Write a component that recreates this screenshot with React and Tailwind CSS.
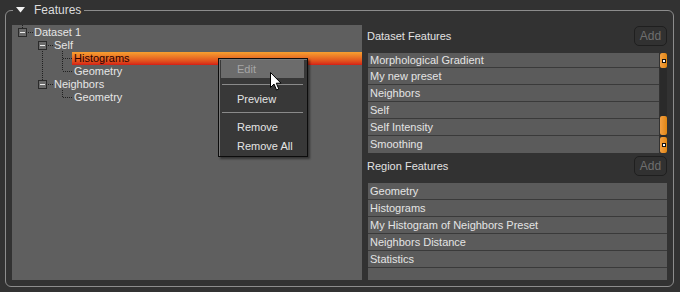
import React from "react";

const font = { fontFamily: '"Liberation Sans", Arial, sans-serif' };

function MinusBox() {
  return (
    <div className="w-[9px] h-[9px] border border-[#2a2a2a] bg-[#6a6a6a] flex items-center justify-center shrink-0">
      <div className="w-[5px] h-px bg-[#eeeeee]" />
    </div>
  );
}

function TreeRow({ indent, box, children, selected }) {
  return (
    <div className="h-[13px] flex items-center" style={{ paddingLeft: indent }}>
      {box && <MinusBox />}
      {box ? (
        <span className="ml-[7px] text-[#e6e6e6]">{children}</span>
      ) : selected ? (
        <div className="flex-1 h-[13px] flex items-center pl-[2px] bg-linear-to-b from-[#f7a030] to-[#d41c16] text-[#2a0000]">
          {children}
        </div>
      ) : (
        <span className="pl-[2px] text-[#e6e6e6]">{children}</span>
      )}
    </div>
  );
}

function AddButton() {
  return (
    <div className="w-[33px] h-[20px] rounded-[5px] border border-[#1f1f1f] bg-[#313131] flex items-center justify-center text-[12px] text-[#6f6f6f]">
      Add
    </div>
  );
}

function ListRow({ h, children, last }) {
  return (
    <div
      className={`flex items-center pl-[2px] text-[#e4e4e4] bg-[#5b5b5b] ${last ? "" : "border-b border-[#3a3a3a]"}`}
      style={{ height: h }}
    >
      {children}
    </div>
  );
}

function ScrollBtn({ h }) {
  return (
    <div className="w-[7px] rounded-[2px] bg-linear-to-r from-[#f4a040] to-[#e0860e] flex items-center justify-center" style={{ height: h }}>
      <div className="w-[4px] h-[4px] bg-[#111] flex items-center justify-center">
        <div className="w-[2px] h-[2px] bg-white" />
      </div>
    </div>
  );
}

export default function App() {
  return (
    <div className="relative w-[680px] h-[292px] bg-[#323232] pt-[10px] px-[5px] text-[11px] leading-none" style={font}>
      <div className="relative w-[669px] h-[277px] border border-[#8c8c8c] rounded-[6px] flex pl-[6px] pt-[14px]">
        {/* title */}
        <div className="absolute -top-[9px] left-[7px] h-[16px] bg-[#323232] flex items-center pl-[3px] pr-[3px]">
          <svg width="9" height="6" viewBox="0 0 9 6">
            <polygon points="0,0 9,0 4.5,5.5" fill="#f2f2f2" />
          </svg>
          <span className="ml-[9px] text-[12px] text-[#dcdcdc]">Features</span>
        </div>

        {/* tree panel */}
        <div className="relative w-[350px] h-[255px] bg-[#5f5f5f] pt-[1px]">
          <svg className="absolute left-0 top-0" width="80" height="80">
            <g stroke="#202020" strokeWidth="1" strokeDasharray="1 1" shapeRendering="crispEdges" fill="none">
              <line x1="10.5" y1="0" x2="10.5" y2="3" />
              <line x1="16" y1="7.5" x2="22" y2="7.5" />
              <line x1="36" y1="20.5" x2="42" y2="20.5" />
              <line x1="30.5" y1="26" x2="30.5" y2="55" />
              <line x1="50.5" y1="26" x2="50.5" y2="46" />
              <line x1="51" y1="33.5" x2="60" y2="33.5" />
              <line x1="51" y1="46.5" x2="60" y2="46.5" />
              <line x1="36" y1="59.5" x2="42" y2="59.5" />
              <line x1="50.5" y1="65" x2="50.5" y2="72" />
              <line x1="51" y1="72.5" x2="60" y2="72.5" />
            </g>
          </svg>
          <TreeRow indent={6} box>Dataset 1</TreeRow>
          <TreeRow indent={26} box>Self</TreeRow>
          <TreeRow indent={60} selected>Histograms</TreeRow>
          <TreeRow indent={60}>Geometry</TreeRow>
          <TreeRow indent={26} box>Neighbors</TreeRow>
          <TreeRow indent={60}>Geometry</TreeRow>
        </div>

        {/* right column */}
        <div className="ml-[4px] w-[302px] flex flex-col pt-[1px] pr-[1px]">
          <div className="h-[20px] flex items-center justify-between pl-[1px]">
            <span className="text-[#e2e2e2]">Dataset Features</span>
            <AddButton />
          </div>
          <div className="mt-[7px] ml-[2px] h-[100px] flex">
            <div className="w-[292px] flex flex-col">
              <ListRow h={15}>Morphological Gradient</ListRow>
              <ListRow h={17}>My new preset</ListRow>
              <ListRow h={17}>Neighbors</ListRow>
              <ListRow h={17}>Self</ListRow>
              <ListRow h={17}>Self Intensity</ListRow>
              <ListRow h={17} last>Smoothing</ListRow>
            </div>
            <div className="ml-px w-[7px] flex flex-col bg-[#2a2a2a]">
              <ScrollBtn h={15} />
              <div className="flex-1 flex flex-col justify-end pb-[2px]">
                <div className="h-[19px] rounded-[2px] bg-linear-to-r from-[#f4a040] to-[#e0860e]" />
              </div>
              <ScrollBtn h={16} />
            </div>
          </div>
          <div className="mt-[3px] h-[20px] flex items-center justify-between pl-[1px]">
            <span className="text-[#e2e2e2]">Region Features</span>
            <AddButton />
          </div>
          <div className="mt-[7px] ml-[2px] w-[299px] h-[97px] flex flex-col bg-[#5b5b5b]">
            <ListRow h={17}>Geometry</ListRow>
            <ListRow h={17}>Histograms</ListRow>
            <ListRow h={17}>My Histogram of Neighbors Preset</ListRow>
            <ListRow h={17}>Neighbors Distance</ListRow>
            <ListRow h={17}>Statistics</ListRow>
          </div>
        </div>
      </div>

      {/* context menu */}
      <div className="absolute left-[218px] top-[58px] w-[90px] h-[99px] border border-[#0c0c0c] bg-[#383838] shadow-[inset_1px_1px_0_#7a7a7a,2px_2px_2px_rgba(0,0,0,0.45)] pt-[1px] pl-[2px] pr-[3px] text-[11px]">
        <div className="h-[18px] bg-[#6c6c6c] flex items-center pl-[16px] text-[#a6a6a6]">Edit</div>
        <div className="h-[12px] pt-[6px] px-[1px]">
          <div className="h-px bg-[#8a8a8a]" />
        </div>
        <div className="h-[18px] flex items-center pl-[16px] text-[#e4e4e4]">Preview</div>
        <div className="h-[10px] pt-[4px] px-[1px]">
          <div className="h-px bg-[#8a8a8a]" />
        </div>
        <div className="h-[19px] flex items-center pl-[16px] text-[#e4e4e4]">Remove</div>
        <div className="h-[18px] flex items-center pl-[16px] text-[#e4e4e4]">Remove All</div>
      </div>

      {/* cursor */}
      <svg className="absolute left-[270px] top-[72px]" width="13" height="20" viewBox="0 0 13 20">
        <path d="M0.5 0.5 L0.5 15.5 L4 12 L6.5 18 L8.8 17 L6.3 11.2 L11 11.2 Z" fill="#ffffff" stroke="#000000" strokeWidth="1" strokeLinejoin="miter" />
      </svg>
    </div>
  );
}
